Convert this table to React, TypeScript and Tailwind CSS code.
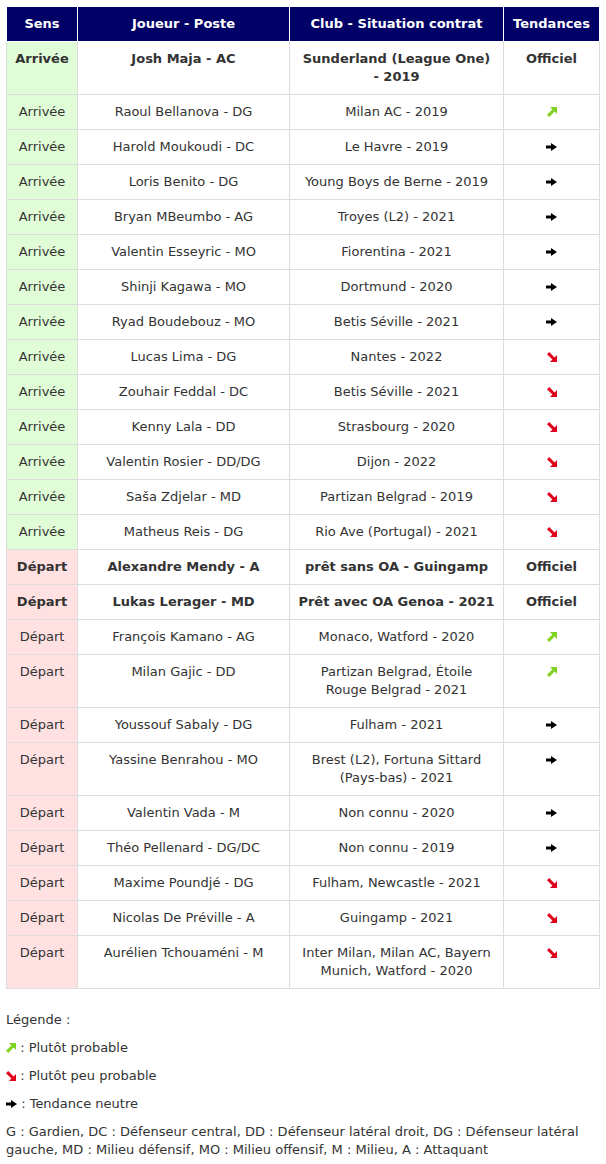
import React from "react";

type Trend = "up" | "down" | "flat" | "off";
type Row = { sens: "Arrivée" | "Départ"; joueur: string; club: React.ReactNode; t: Trend; bold?: boolean };

const rows: Row[] = [
  { sens: "Arrivée", joueur: "Josh Maja - AC", club: "Sunderland (League One) - 2019", t: "off", bold: true },
  { sens: "Arrivée", joueur: "Raoul Bellanova - DG", club: "Milan AC - 2019", t: "up" },
  { sens: "Arrivée", joueur: "Harold Moukoudi - DC", club: "Le Havre - 2019", t: "flat" },
  { sens: "Arrivée", joueur: "Loris Benito - DG", club: "Young Boys de Berne - 2019", t: "flat" },
  { sens: "Arrivée", joueur: "Bryan MBeumbo - AG", club: "Troyes (L2) - 2021", t: "flat" },
  { sens: "Arrivée", joueur: "Valentin Esseyric - MO", club: "Fiorentina - 2021", t: "flat" },
  { sens: "Arrivée", joueur: "Shinji Kagawa - MO", club: "Dortmund - 2020", t: "flat" },
  { sens: "Arrivée", joueur: "Ryad Boudebouz - MO", club: "Betis Séville - 2021", t: "flat" },
  { sens: "Arrivée", joueur: "Lucas Lima - DG", club: "Nantes - 2022", t: "down" },
  { sens: "Arrivée", joueur: "Zouhair Feddal - DC", club: "Betis Séville - 2021", t: "down" },
  { sens: "Arrivée", joueur: "Kenny Lala - DD", club: "Strasbourg - 2020", t: "down" },
  { sens: "Arrivée", joueur: "Valentin Rosier - DD/DG", club: "Dijon - 2022", t: "down" },
  { sens: "Arrivée", joueur: "Saša Zdjelar - MD", club: "Partizan Belgrad - 2019", t: "down" },
  { sens: "Arrivée", joueur: "Matheus Reis - DG", club: "Rio Ave (Portugal) - 2021", t: "down" },
  { sens: "Départ", joueur: "Alexandre Mendy - A", club: "prêt sans OA - Guingamp", t: "off", bold: true },
  { sens: "Départ", joueur: "Lukas Lerager - MD", club: "Prêt avec OA Genoa - 2021", t: "off", bold: true },
  { sens: "Départ", joueur: "François Kamano - AG", club: "Monaco, Watford - 2020", t: "up" },
  {
    sens: "Départ",
    joueur: "Milan Gajic - DD",
    club: (
      <>
        Partizan Belgrad, Étoile
        <br />
        Rouge Belgrad - 2021
      </>
    ),
    t: "up",
  },
  { sens: "Départ", joueur: "Youssouf Sabaly - DG", club: "Fulham - 2021", t: "flat" },
  { sens: "Départ", joueur: "Yassine Benrahou - MO", club: "Brest (L2), Fortuna Sittard (Pays-bas) - 2021", t: "flat" },
  { sens: "Départ", joueur: "Valentin Vada - M", club: "Non connu - 2020", t: "flat" },
  { sens: "Départ", joueur: "Théo Pellenard - DG/DC", club: "Non connu - 2019", t: "flat" },
  { sens: "Départ", joueur: "Maxime Poundjé - DG", club: "Fulham, Newcastle - 2021", t: "down" },
  { sens: "Départ", joueur: "Nicolas De Préville - A", club: "Guingamp - 2021", t: "down" },
  { sens: "Départ", joueur: "Aurélien Tchouaméni - M", club: "Inter Milan, Milan AC, Bayern Munich, Watford - 2020", t: "down" },
];

function Up() {
  return (
    <svg width="10" height="10" viewBox="0 0 10 10" className="block">
      <polygon points="3,0 10,0 10,7 7.6,4.6 2.2,10 0,7.8 5.4,2.4" fill="#7ed321" />
    </svg>
  );
}
function Down() {
  return (
    <svg width="10" height="10" viewBox="0 0 10 10" className="block">
      <polygon points="3,10 10,10 10,3 7.6,5.4 2.2,0 0,2.2 5.4,7.6" fill="#e0001b" />
    </svg>
  );
}
function Flat() {
  return (
    <svg width="11" height="8" viewBox="0 0 11 8" className="block">
      <polygon points="0,2.5 5,2.5 5,0 11,4 5,8 5,5.5 0,5.5" fill="#000" />
    </svg>
  );
}

function TrendCell({ t }: { t: Trend }) {
  if (t === "off") return <span className="font-bold">Officiel</span>;
  return (
    <div className="flex h-[18px] items-center justify-center">
      {t === "up" ? <Up /> : t === "down" ? <Down /> : <Flat />}
    </div>
  );
}

export default function App() {
  const th = "border border-white bg-[#000066] text-white font-bold px-[6px] py-[8px] leading-[18px] text-center";
  const td = "border border-[#dddddd] px-[8px] py-[8px] leading-[18px] text-center align-top";
  return (
    <div className="bg-white font-['Verdana','DejaVu_Sans',sans-serif] text-[13px] text-[#333333] pt-[6px] px-[6px] pb-[10px]">
      <table className="border-collapse table-fixed w-[593px]">
        <colgroup>
          <col className="w-[71px]" />
          <col className="w-[212px]" />
          <col className="w-[214px]" />
          <col className="w-[96px]" />
        </colgroup>
        <thead>
          <tr>
            <th className={th}>Sens</th>
            <th className={th}>Joueur - Poste</th>
            <th className={th}>Club - Situation contrat</th>
            <th className={th}>Tendances</th>
          </tr>
        </thead>
        <tbody>
          {rows.map((r, i) => (
            <tr key={i} className={r.bold ? "font-bold" : ""}>
              <td className={`${td} px-[2px] ${r.sens === "Arrivée" ? "bg-[#e0fdd8]" : "bg-[#ffe1e1]"}`}>{r.sens}</td>
              <td className={td}>{r.joueur}</td>
              <td className={td}>{r.club}</td>
              <td className={td}>
                <TrendCell t={r.t} />
              </td>
            </tr>
          ))}
        </tbody>
      </table>
      <div className="mt-[22px] leading-[18px] flex flex-col gap-[10px]">
        <p>Légende :</p>
        <p className="flex items-center">
          <Up />
          <span>&nbsp;: Plutôt probable</span>
        </p>
        <p className="flex items-center">
          <Down />
          <span>&nbsp;: Plutôt peu probable</span>
        </p>
        <p className="flex items-center">
          <Flat />
          <span>&nbsp;: Tendance neutre</span>
        </p>
        <p>
          G : Gardien, DC : Défenseur central, DD : Défenseur latéral droit, DG : Défenseur latéral gauche, MD : Milieu défensif, MO : Milieu offensif, M : Milieu, A : Attaquant
        </p>
      </div>
    </div>
  );
}
